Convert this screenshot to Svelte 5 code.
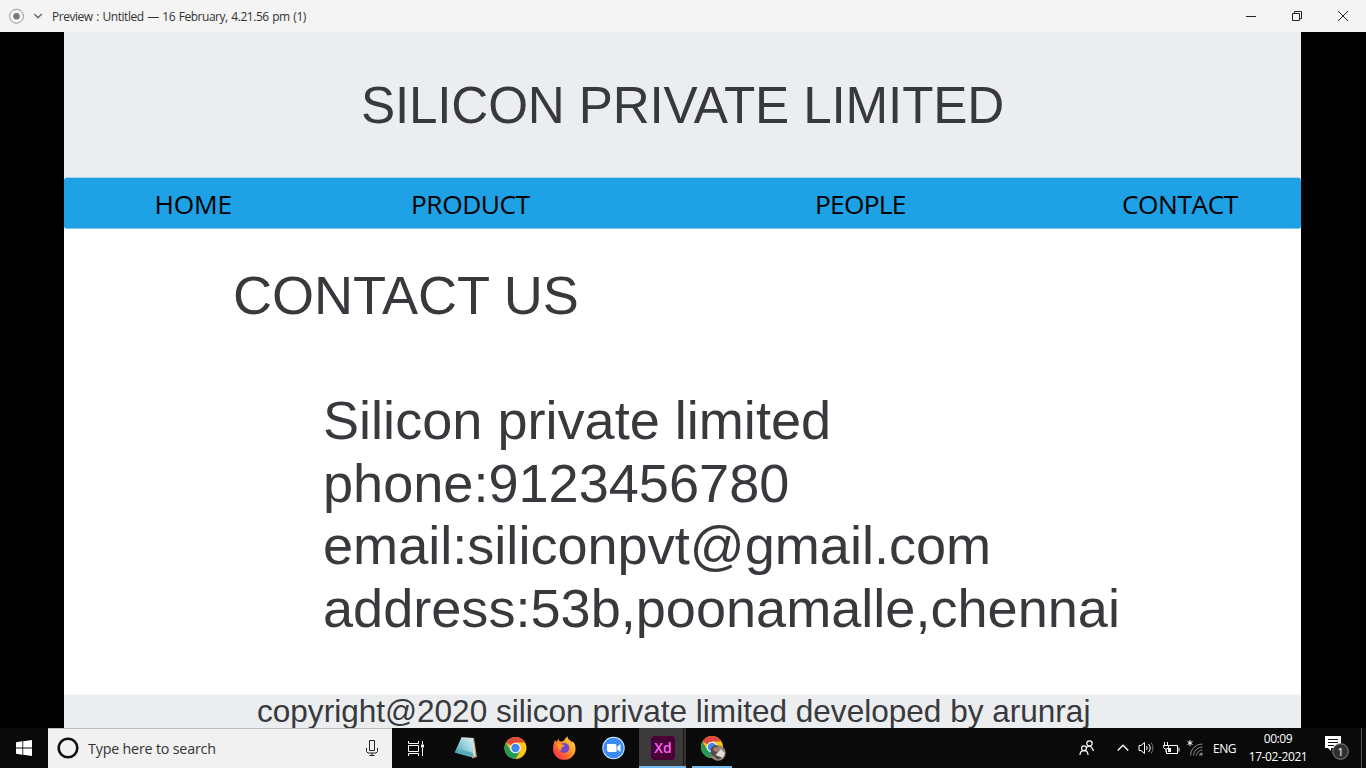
<script>
  const nav = ['HOME', 'PRODUCT', 'PEOPLE', 'CONTACT'];
  const lines = [
    'Silicon private limited',
    'phone:9123456780',
    'email:siliconpvt@gmail.com',
    'address:53b,poonamalle,chennai'
  ];
</script>

<div class="screen">
  <header class="titlebar">
    <svg class="rec" width="16" height="16" viewBox="0 0 16 16"><circle cx="7.500" cy="8.200" r="7" fill="none" stroke="#999" /><circle cx="7.500" cy="8.200" r="3.200" fill="#777" /></svg>
    <svg class="chev" width="10" height="8" viewBox="0 0 10 8"><path d="M1.300 2L5 5.700 8.700 2" fill="none" stroke="#666" stroke-width="1.500" /></svg>
    <span class="title">Preview : Untitled — 16 February, 4.21.56 pm (1)</span>
    <div class="controls">
      <svg width="46" height="32" viewBox="0 0 46 32"><path d="M18 16.500h10" stroke="#222" /></svg>
      <svg width="46" height="32" viewBox="0 0 46 32" fill="none" stroke="#222"><path d="M18.500 13.500h7v7h-7zM20.500 13.500v-2h7v7h-2" /></svg>
      <svg width="46" height="32" viewBox="0 0 46 32"><path d="M18 11l10 10M28 11l-10 10" stroke="#222" /></svg>
    </div>
  </header>

  <main class="stage">
    <div class="page">
      <div class="banner"><h1>SILICON PRIVATE LIMITED</h1></div>
      <nav>
        {#each nav as item}
          <span class={item.toLowerCase()}>{item}</span>
        {/each}
      </nav>
      <section>
        <h2>CONTACT US</h2>
        <div class="details">
          {#each lines as line}<p>{line}</p>{/each}
        </div>
      </section>
      <footer>copyright@2020 silicon private limited developed by arunraj</footer>
    </div>
  </main>

  <div class="taskbar">
    <div class="start">
      <svg width="16" height="16" viewBox="0 0 16 16" fill="#fff"><path d="M0 2.200L6.400 1.300V7.500H0zM7.200 1.200L16 0V7.500H7.200zM0 8.400H6.400V14.700L0 13.800zM7.200 8.400H16V16L7.200 14.800z" /></svg>
    </div>
    <div class="search">
      <svg width="22" height="22" viewBox="0 0 22 22"><circle cx="11" cy="11" r="9.300" fill="none" stroke="#111" stroke-width="2.600" /></svg>
      <span>Type here to search</span>
      <svg class="mic" width="12" height="18" viewBox="0 0 12 18" fill="none" stroke="#222"><path d="M3.500 1.500h5v10h-5zM.5 9v3.500l1.500 1.500h8l1.500-1.500V9M6 14v2.500M3.500 16.500h5" /></svg>
    </div>
    <div class="app task">
      <svg width="18" height="17" viewBox="0 0 18 17" fill="none" stroke="#fff"><path d="M1.500 1v2.500h10V1M1.500 5.500h10v6h-10zM1.500 16v-2.500h10V16M15.500 1v3M15.500 8v8" /><path d="M14 4.500h3v3h-3z" fill="#fff" stroke="none" /></svg>
    </div>
    <div class="app">
      <svg width="26" height="26" viewBox="0 0 26 26">
        <defs><linearGradient id="note" x1="1" y1="0" x2="0" y2="1"><stop offset="0" stop-color="#e1f3f5" /><stop offset=".5" stop-color="#8bcbd7" /><stop offset="1" stop-color="#257d91" /></linearGradient></defs>
        <path d="M21 3l3 19-5 1.500z" fill="#b99c67" /><path d="M20.500 3.500l1.800 17.500-3.300 1.500z" fill="#e8e5db" />
        <path d="M8.500 2.500L20.500 3 20 22.500 1.500 17.500z" fill="url(#note)" /><path d="M2 17.500l7-2.500 11.300 3v4.500z" fill="#58a9ba" /><path d="M8.500 2.500l12 .5v1.500L8 4z" fill="#d7dfdf" />
      </svg>
    </div>
    <div class="app">
      <svg width="24" height="24" viewBox="0 0 24 24"><circle cx="12.500" cy="12" r="11" fill="#fbc616" /><g transform="translate(.5 0)"><path d="M12 12L2.500 6.500A11 11 0 0 1 21.500 6.500H12z" fill="#df4a3c" /><path d="M2.500 6.500A11 11 0 0 0 12 23L16.800 14.700 12 17 7.200 14.700z" fill="#219b57" /><circle cx="12" cy="12" r="5.300" fill="#fff" /><circle cx="12" cy="12" r="4.200" fill="#4286ee" /></g></svg>
    </div>
    <div class="app">
      <svg width="24" height="24" viewBox="0 0 24 24">
        <defs><linearGradient id="fox" x1="1" y1="0" x2="0" y2="1"><stop offset="0" stop-color="#ffe644" /><stop offset=".4" stop-color="#ff9d29" /><stop offset=".75" stop-color="#fb4b3c" /><stop offset="1" stop-color="#ec1f75" /></linearGradient></defs>
        <path d="M1 13C1 9 2 7 3 4l1.500 2L6.500 2.500C6.500 5 8 5.500 10 5.500c2 0 3-3 5.500-5.200 0 3.500 3.500 4 4.500 6.200L20.500 5c2.500 2.500 3 5 3 8A11.200 10.800 0 0 1 1 13z" fill="url(#fox)" />
        <circle cx="12.300" cy="12" r="5" fill="#7047cc" /><path d="M5 7.500c2.500-.5 4 0 5 1l3 .7-2.500 1.800c-1.500 1-1.500 2-.5 3.500-3 0-5-3-5-7z" fill="#ff9a20" />
      </svg>
    </div>
    <div class="app">
      <svg width="24" height="24" viewBox="0 0 24 24"><circle cx="12.500" cy="12" r="11.200" fill="#dceaff" /><circle cx="12.500" cy="12" r="10.300" fill="#3b8df5" /><path d="M6 8h7.500q2 0 2 2v6H8q-2 0-2-2zM16.300 10.700L19.500 8v8l-3.200-2.500z" fill="#fff" /></svg>
    </div>
    <div class="app active">
      <span class="xd">Xd</span>
    </div>
    <div class="app last">
      <svg width="26" height="26" viewBox="0 0 26 26"><circle cx="12" cy="12" r="11" fill="#fbc616" /><path d="M12 12L2.500 6.500A11 11 0 0 1 21.500 6.500H12z" fill="#df4a3c" /><path d="M2.500 6.500A11 11 0 0 0 12 23L16.800 14.700 12 17 7.200 14.700z" fill="#219b57" /><circle cx="12" cy="12" r="5.300" fill="#fff" /><circle cx="12" cy="12" r="4.200" fill="#4286ee" /><circle cx="18" cy="18" r="7.700" fill="#948479" /><path d="M11 13.500q4-6 7-2l-1 6 5-3q3 3 2 7l-6 3-7-5z" fill="#54484a" /><circle cx="15.800" cy="14.300" r="2.400" fill="#b07b69" /><path d="M15.500 20l5.500-6 4 4-2 5z" fill="#e1dbd5" /></svg>
    </div>
    <div class="tray">
      <svg class="contacts" width="16" height="16" viewBox="0 0 16 16" fill="none" stroke="#fff" stroke-width="1.200"><circle cx="10.500" cy="3.500" r="2.700" /><circle cx="5" cy="8.300" r="2.400" /><path d="M1 15q0-4.300 4-4.300t4 4.300M7.500 7.500Q9 6 11 6.300t3.500 4.700" /></svg>
      <svg class="up" width="12" height="8" viewBox="0 0 12 8" fill="none" stroke="#fff" stroke-width="1.300"><path d="M.7 6.500L6 1.200l5.300 5.300" /></svg>
      <svg class="vol" width="17" height="14" viewBox="0 0 17 14" fill="none" stroke="#fff"><path d="M1 4.500h2L6.500 1.500v11L3 9.500H1zM8.500 5q1.500 2 0 4M10.500 3q3.500 4 0 8" /><path d="M13 1.500q4 5.500 0 11" stroke="#777" /></svg>
      <svg class="bat" width="17" height="13" viewBox="0 0 17 13" fill="none" stroke="#fff"><path d="M6 3.500h8.500v8h-11V8.500M16 5.500v4M1.500 0v3M4.500 0v3M.5 3.500h5v2l-1.500 1.500H2L.5 5.500zM3 7v3" /><path d="M5 6h3v4H5z" fill="#fff" stroke="none" /></svg>
      <svg class="wifi" width="17" height="17" viewBox="0 0 17 17" fill="none"><path d="M3 0v6M.5 1.500l5 3M5.500 1.500l-5 3" stroke="#fff" /><path d="M3.500 15.500A11.500 11.500 0 0 1 15.500 4M6.500 15.500A9 9 0 0 1 15.500 7M9.500 15.500A6 6 0 0 1 15.500 10" stroke="#888" /><path d="M12 15.500A3.500 3.500 0 0 1 15.500 12.500V15.500z" fill="#888" /></svg>
      <span class="lang">ENG</span>
      <div class="clock"><span class="time">00:09</span><span class="date">17-02-2021</span></div>
      <svg class="note" width="25" height="28" viewBox="0 0 25 28"><path d="M0 2h16v12H6v3l-3-3H0z" fill="#fff" /><path d="M3 5.500h10M3 8.500h10M3 11.500h6" stroke="#111" /><circle cx="15.500" cy="17.500" r="7.800" fill="#303030" stroke="#888" /><text x="15.500" y="21.500" text-anchor="middle" fill="#fff" font-size="11.500">1</text></svg>
      <i class="peek"></i>
    </div>
  </div>
</div>

<style>
  :global(body) { margin: 0; overflow: hidden; background: #000; }
  .screen { width: 1366px; height: 768px; display: flex; flex-direction: column; background: #000; font-family: "Open Sans", "Noto Sans", sans-serif; }
  svg { display: block; flex: none; }
  .titlebar { height: 32px; display: flex; align-items: center; background: #f4f4f4; color: #333; flex: none; }
  .rec { margin-left: 9px; }
  .chev { margin-left: 8px; }
  .title { margin-left: 9px; font-size: 12px; letter-spacing: -.46px; word-spacing: .9px; white-space: nowrap; line-height: 16px; padding-top: 1px; }
  .controls { display: flex; margin-left: auto; }
  .stage { height: 696px; padding: 0 65px 0 64px; flex: none; }
  .page { height: 696px; display: flex; flex-direction: column; background: #fff; font-family: "Liberation Sans", Arial, sans-serif; color: #37393c; }
  .banner { height: 145px; background: #ecedef; display: flex; justify-content: center; flex: none; }
  h1, h2, p { margin: 0; font-weight: 400; white-space: nowrap; }
  h1 { font-size: 51.200px; letter-spacing: -.15px; line-height: 60px; padding-top: 44px; }
  nav { height: 50px; border: 1px solid #a9d2e8; border-bottom-color: #7cc7ef; border-width: 1px 0; border-radius: 3px; background: #1ea1e5; display: flex; align-items: center; font-family: "Open Sans", "Noto Sans", sans-serif; color: #000; font-size: 26.300px; letter-spacing: -.45px; flex: none; }
  nav span { line-height: 36px; padding-top: 2px; white-space: nowrap; }
  .home { width: 256.500px; margin-left: 90.500px; letter-spacing: -.2px; }
  .product { width: 404px; }
  .people { width: 307px; letter-spacing: -.75px; }
  section { height: 465px; box-sizing: border-box; padding: 35px 0 0 169px; flex: none; }
  h2 { font-size: 54.100px; line-height: 62px; letter-spacing: -.08px; }
  .details { padding: 63px 0 0 90px; }
  p { font-size: 54.100px; line-height: 62.500px; }
  footer { height: 34px; background: #ecedef; border-top: 1px solid #f5f6f7; box-sizing: border-box; padding-left: 193px; font-size: 31.560px; line-height: 32px; white-space: nowrap; flex: none; }
  .taskbar { height: 40px; display: flex; background: #0a0a0a; color: #fff; flex: none; }
  .start { width: 48px; display: grid; place-items: center; }
  .search { width: 344px; box-sizing: border-box; border-top: 1px solid #bbb; background: #f1f1f1; display: flex; align-items: center; padding: 0 14px 1px 9px; color: #333; font-size: 14.300px; letter-spacing: -.2px; }
  .search span { margin-left: 9px; white-space: nowrap; }
  .mic { margin-left: auto; }
  .app { width: 49px; display: grid; place-items: center; flex: none; }
  .task { padding-right: 1px; width: 48px; }
  .active { width: 47px; margin-left: 2px; background: linear-gradient(90deg, #3b3a3a 44px, #181818 44px, #181818 45px, #333 45px); border-bottom: 2px solid #76b9ed; height: 38px; }
  .xd { width: 24px; height: 24px; margin: 2px 0 0 1px; border-radius: 4px; background: #470137; color: #ff61f6; font-size: 14px; font-weight: 600; line-height: 23px; text-align: center; }
  .last { width: 38px; padding-left: 2px; margin-left: 6px; height: 38px; border-bottom: 2px solid #76b9ed; }
  .last svg { margin-top: 2px; }
  .tray { display: flex; align-items: center; margin-left: auto; font-size: 12px; }
  .up { margin-left: 22px; }
  .vol { margin-left: 9px; }
  .bat { margin-left: 8px; }
  .wifi { margin-left: 7px; }
  .lang { margin-left: 9px; width: 24px; letter-spacing: -.5px; }
  .clock { width: 60px; margin-left: 11px; display: flex; flex-direction: column; align-items: center; line-height: 18px; letter-spacing: -.4px; white-space: nowrap; }
  .note { margin-left: 17px; }
  .peek { width: 1px; height: 40px; background: #555; margin: 0 4px 0 11px; }
</style>
